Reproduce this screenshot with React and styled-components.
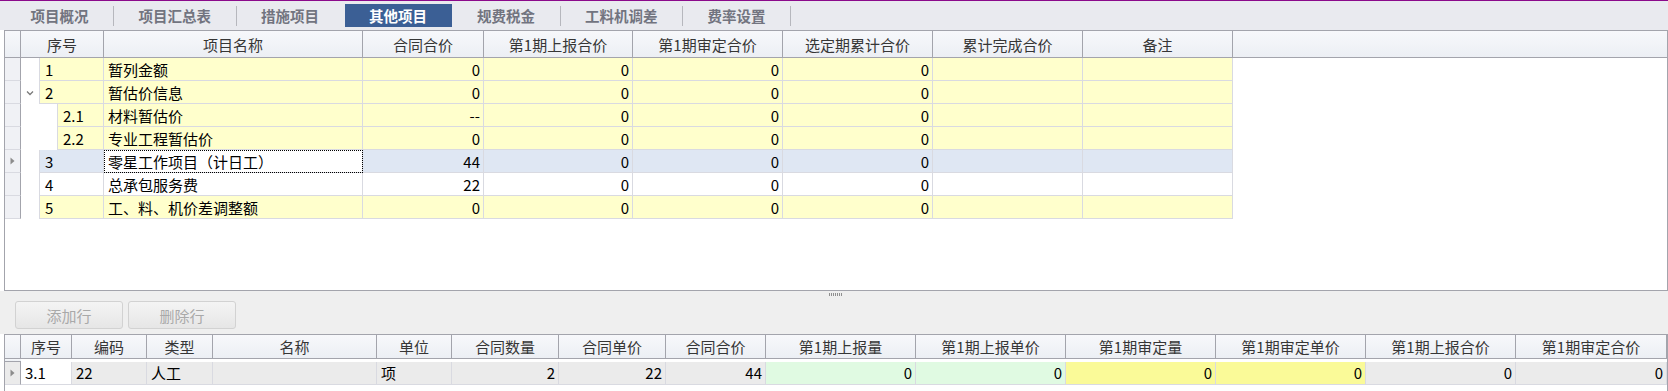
import React from 'react';
import styled, { createGlobalStyle } from 'styled-components';

const GlobalStyle = createGlobalStyle`
  * { box-sizing: border-box; }
  html, body { margin: 0; padding: 0; background: #fff; }
  body {
    font-family: "Noto Sans CJK SC", "Noto Sans", sans-serif;
    font-size: 15px;
    color: #000;
  }
`;

const TOP_COLS = '16px 83px 259px 121px 149px 150px 150px 150px 150px 1fr';
const BOTTOM_COLS = '16px 51px 75px 66px 164px 75px 107px 107px 100px repeat(5, 150px) 1fr';

const YELLOW = '#ffffcc';
const BLUE = '#dfe7f3';
const GRAY = '#ebebeb';
const GREEN = '#e0fae2';
const LEMON = '#fafa98';

const tabs = ['项目概况', '项目汇总表', '措施项目', '其他项目', '规费税金', '工料机调差', '费率设置'];
const ACTIVE_TAB = 3;

const topHeaders = ['序号', '项目名称', '合同合价', '第1期上报合价', '第1期审定合价', '选定期累计合价', '累计完成合价', '备注'];

const topRows = [
  { seq: '1', level: 0, name: '暂列金额', vals: ['0', '0', '0', '0'], bg: YELLOW },
  { seq: '2', level: 0, open: true, name: '暂估价信息', vals: ['0', '0', '0', '0'], bg: YELLOW },
  { seq: '2.1', level: 1, name: '材料暂估价', vals: ['--', '0', '0', '0'], bg: YELLOW },
  { seq: '2.2', level: 1, name: '专业工程暂估价', vals: ['0', '0', '0', '0'], bg: YELLOW },
  { seq: '3', level: 0, name: '零星工作项目（计日工）', vals: ['44', '0', '0', '0'], bg: BLUE, current: true },
  { seq: '4', level: 0, name: '总承包服务费', vals: ['22', '0', '0', '0'], bg: '#fff' },
  { seq: '5', level: 0, name: '工、料、机价差调整额', vals: ['0', '0', '0', '0'], bg: YELLOW },
];

const bottomHeaders = ['序号', '编码', '类型', '名称', '单位', '合同数量', '合同单价', '合同合价',
  '第1期上报量', '第1期上报单价', '第1期审定量', '第1期审定单价', '第1期上报合价', '第1期审定合价'];

const bottomCells = [
  { text: '3.1', bg: '#fff' },
  { text: '22', bg: GRAY },
  { text: '人工', bg: GRAY },
  { text: '', bg: GRAY },
  { text: '项', bg: GRAY },
  { text: '2', bg: GRAY, num: true },
  { text: '22', bg: GRAY, num: true },
  { text: '44', bg: GRAY, num: true },
  { text: '0', bg: GREEN, num: true },
  { text: '0', bg: GREEN, num: true },
  { text: '0', bg: LEMON, num: true },
  { text: '0', bg: LEMON, num: true },
  { text: '0', bg: GRAY, num: true },
  { text: '0', bg: GRAY, num: true },
];

const Page = styled.div`
  display: flex;
  flex-direction: column;
  height: 391px;
  overflow: hidden;
  border-top: 1px solid #8b0a8b;
`;

/* tab strip */
const TabBar = styled.div`
  display: flex;
  align-items: center;
  height: 29px;
  padding: 0 0 0 6px;
  background: #e9eaef;
`;

const Tab = styled.div`
  height: 23px;
  padding: 0 24.5px;
  display: flex;
  align-items: center;
  font-size: 14.5px;
  font-weight: 700;
  white-space: nowrap;
  color: ${p => (p.$active ? '#fff' : '#72747f')};
  background: ${p => (p.$active ? '#3b5f95' : 'transparent')};
`;

const TabSep = styled.span`
  width: 1px;
  height: 20px;
  background: ${p => (p.$hidden ? 'transparent' : '#b6b7bd')};
`;

/* grids */
const Grid = styled.div`
  margin-left: 4px;
  border: 1px solid #a3a4ac;
  background: #fff;
  height: ${p => p.$h};
  flex: ${p => (p.$grow ? 1 : 'none')};
  ${p => p.$open && 'border-bottom: none;'}
  overflow: hidden;
`;

const Row = styled.div`
  display: grid;
  grid-template-columns: ${p => p.$cols};
  height: ${p => p.$h || '23px'};
`;

const HeadCell = styled.div`
  display: flex;
  align-items: center;
  justify-content: center;
  background: linear-gradient(#f7f8fb, #eceff4);
  border-right: ${p => (p.$last ? 'none' : '1px solid #a3a4ac')};
  border-bottom: 1px solid #a3a4ac;
  color: #363636;
  white-space: nowrap;
  overflow: hidden;
`;

const RowHead = styled.div`
  display: flex;
  align-items: center;
  justify-content: center;
  background: ${p => p.$bg || '#f0f1f5'};
  border-right: 1px solid #a3a4ac;
  border-bottom: 1px solid #d9dae1;
`;

const Cell = styled.div`
  display: flex;
  align-items: center;
  justify-content: ${p => (p.$num ? 'flex-end' : 'flex-start')};
  padding: ${p => (p.$num ? '0 3px 0 0' : '0 0 0 4px')};
  background: ${p => p.$bg};
  border-right: 1px solid #d9dae1;
  border-bottom: 1px solid #d9dae1;
  white-space: nowrap;
  overflow: hidden;
  ${p => p.$focus && 'outline: 1px dotted #000; outline-offset: -1px;'}
`;

const SeqCell = styled.div`
  display: flex;
  border-right: 1px solid #d9dae1;
`;

const Indent = styled.div`
  width: ${p => p.$w}px;
  flex: none;
  display: flex;
  align-items: center;
  justify-content: center;
`;

const SeqFill = styled.div`
  flex: 1;
  display: flex;
  align-items: center;
  padding-left: 5px;
  background: ${p => p.$bg};
  border-left: 1px solid #d9dae1;
  border-bottom: 1px solid #d9dae1;
`;

/* middle panel */
const MidPanel = styled.div`
  display: flex;
  flex-direction: column;
  height: 43px;
  background: #efefef;
`;

const GripRow = styled.div`
  height: 10px;
  display: flex;
  justify-content: center;
  padding: 2px 0 0 2px;
`;

const Grip = styled.span`
  width: 13px;
  height: 3px;
  background: repeating-linear-gradient(to right, #8f8f8f 0 1px, transparent 1px 2px);
`;

const ButtonRow = styled.div`
  display: flex;
  gap: 5px;
  padding-left: 15px;
`;

const Button = styled.button`
  width: 108px;
  height: 28px;
  border: 1px solid #d2d2d2;
  border-radius: 3px;
  background: linear-gradient(#f4f4f4, #e6e6e6);
  color: #a9a9a9;
  font-family: inherit;
  font-size: 15px;
  padding: 0;
`;

const Arrow = () => (
  <svg width="5" height="8" viewBox="0 0 5 8">
    <path d="M0.5 0.5 L4.5 4 L0.5 7.5 Z" fill="#8c8c8c" />
  </svg>
);

const Chevron = () => (
  <svg width="8" height="6" viewBox="0 0 8 6">
    <polyline points="1,1.5 4,4.5 7,1.5" fill="none" stroke="#7a7a7a" strokeWidth="1.3" />
  </svg>
);

function TopRow({ row }) {
  return (
    <Row $cols={TOP_COLS}>
      <RowHead>{row.current && <Arrow />}</RowHead>
      <SeqCell>
        <Indent $w={row.level ? 36 : 18}>{row.open && <Chevron />}</Indent>
        <SeqFill $bg={row.bg}>{row.seq}</SeqFill>
      </SeqCell>
      <Cell $bg={row.current ? '#fff' : row.bg} $focus={row.current}>{row.name}</Cell>
      {row.vals.map((v, i) => (
        <Cell key={i} $num $bg={row.bg}>{v}</Cell>
      ))}
      <Cell $bg={row.bg} />
      <Cell $bg={row.bg} />
      <div />
    </Row>
  );
}

export default function App() {
  return (
    <>
      <GlobalStyle />
      <Page>
        <TabBar>
          {tabs.map((t, i) => (
            <React.Fragment key={t}>
              <Tab $active={i === ACTIVE_TAB}>{t}</Tab>
              <TabSep $hidden={i === ACTIVE_TAB || i + 1 === ACTIVE_TAB} />
            </React.Fragment>
          ))}
        </TabBar>

        <Grid $h="261px">
          <Row $cols={TOP_COLS} $h="27px">
            <HeadCell />
            {topHeaders.map(h => (
              <HeadCell key={h}>{h}</HeadCell>
            ))}
            <HeadCell $last />
          </Row>
          {topRows.map(r => (
            <TopRow key={r.seq} row={r} />
          ))}
        </Grid>

        <MidPanel>
          <GripRow>
            <Grip />
          </GripRow>
          <ButtonRow>
            <Button disabled>添加行</Button>
            <Button disabled>删除行</Button>
          </ButtonRow>
        </MidPanel>

        <Grid $grow $open>
          <Row $cols={BOTTOM_COLS} $h="27px">
            <HeadCell />
            {bottomHeaders.map(h => (
              <HeadCell key={h}>{h}</HeadCell>
            ))}
            <HeadCell $last />
          </Row>
          <Row $cols={BOTTOM_COLS}>
            <RowHead $bg={GRAY}>
              <Arrow />
            </RowHead>
            {bottomCells.map((c, i) => (
              <Cell key={i} $bg={c.bg} $num={c.num}>{c.text}</Cell>
            ))}
            <div />
          </Row>
        </Grid>
      </Page>
    </>
  );
}
